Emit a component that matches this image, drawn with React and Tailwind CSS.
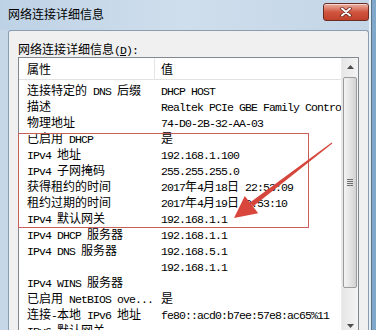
import React from 'react';

// rows of the details list: [property, value]
const rows = [
  ['连接特定的 DNS 后缀', 'DHCP HOST'],
  ['描述', 'Realtek PCIe GBE Family Controller'],
  ['物理地址', '74-D0-2B-32-AA-03'],
  ['已启用 DHCP', '是'],
  ['IPv4 地址', '192.168.1.100'],
  ['IPv4 子网掩码', '255.255.255.0'],
  ['获得租约的时间', '2017年4月18日 22:53:09'],
  ['租约过期的时间', '2017年4月19日 0:53:10'],
  ['IPv4 默认网关', '192.168.1.1'],
  ['IPv4 DHCP 服务器', '192.168.1.1'],
  ['IPv4 DNS 服务器', '192.168.5.1'],
  ['', '192.168.1.1'],
  ['IPv4 WINS 服务器', ''],
  ['已启用 NetBIOS ove...', '是'],
  ['连接-本地 IPv6 地址', 'fe80::acd0:b7ee:57e8:ac65%11'],
  ['IPv6 默认网关', ''],
];

// split into CJK and latin runs so latin gets the narrow mono face
const Mixed = ({ text }) => {
  const parts = text.split(/([\u3000-\u9fff\uff00-\uffef]+)/).filter(Boolean);
  return parts.map((p, i) =>
    /[\u3000-\u9fff\uff00-\uffef]/.test(p) ? (
      <span key={i} className="text-[12px]">{p}</span>
    ) : (
      <span key={i} className="font-['Liberation_Mono',monospace] text-[11.5px] tracking-[-0.9px]">{p}</span>
    )
  );
};

function App() {
  return (
    <div className="relative w-[376px] h-[330px] overflow-hidden flex bg-[#c6d7e8] font-['Noto_Sans_CJK_SC',sans-serif] text-black">
      <div className="w-[369px] shrink-0 flex flex-col">
        {/* title bar */}
        <div className="h-[30px] shrink-0 flex items-start justify-between pl-2 bg-gradient-to-r from-[#bed2e6] via-[#cfdeec] to-[#c3d5e7]">
          <span className="text-[12px] leading-[16px] mt-[6px]">网络连接详细信息</span>
          <div className="mt-[3px] w-[46px] h-[18px] rounded-[3px] border border-[#6b2c24] bg-gradient-to-b from-[#eab0a2] via-[#d0553f] to-[#c0412b] flex items-center justify-center shadow-[inset_0_1px_0_rgba(255,255,255,0.5)]">
            <svg width="12" height="10" viewBox="0 0 12 10">
              <path d="M2 1.5 L10 8.5 M10 1.5 L2 8.5" stroke="#5a2018" strokeWidth="3.4" strokeLinecap="round" />
              <path d="M2 1.5 L10 8.5 M10 1.5 L2 8.5" stroke="#ffffff" strokeWidth="2" strokeLinecap="round" />
            </svg>
          </div>
        </div>

        {/* dialog body */}
        <div className="ml-2 flex-1 min-h-0 overflow-hidden bg-[#f0f0f0] border-l border-t border-r border-[#8b9db1] rounded-t-[3px] pt-2 px-[9px]">
          <div className="h-4 leading-4 whitespace-pre">
            <span className="text-[12px]">网络连接详细信息</span>
            <span className="font-['Liberation_Mono',monospace] text-[11.5px] tracking-[-0.9px]">(<span className="underline">D</span>):</span>
          </div>

          <div className="mt-[2px] border border-[#828790] bg-white flex h-[300px]">
            <div className="flex-1 min-w-0 overflow-hidden">
              {/* header */}
              <div className="h-[22px] flex border-b border-[#e2e2e2]">
                <div className="w-[136px] shrink-0 pl-2 flex items-center border-r border-[#e5e5e5] text-[12px]">属性</div>
                <div className="pl-[6px] flex items-center text-[12px]">值</div>
              </div>
              {rows.map(([k, v], i) => (
                <div key={i} className="h-4 leading-4 flex whitespace-pre">
                  <div className="w-[136px] shrink-0 pl-2">
                    <Mixed text={k} />
                  </div>
                  <div className="pl-[6px] shrink-0">
                    <Mixed text={v} />
                  </div>
                </div>
              ))}
            </div>

            {/* scrollbar */}
            <div className="w-[17px] shrink-0 flex flex-col bg-gradient-to-r from-[#e6e6e6] to-[#f4f4f4] border-l border-[#eaeaea]">
              <div className="h-[17px] shrink-0 flex items-center justify-center">
                <svg width="7" height="4" viewBox="0 0 7 4"><path d="M0 4 L3.5 0 L7 4 Z" fill="#4d4d4d" /></svg>
              </div>
              <div className="mt-[2px] mx-[1px] h-[211px] shrink-0 rounded-[2px] border border-[#9b9b9b] bg-gradient-to-r from-[#f3f3f3] via-[#e4e4e4] to-[#d2d2d2] flex flex-col items-center justify-center gap-[1px]">
                <div className="w-[6px] h-[1px] bg-[#6f6f6f]" />
                <div className="w-[6px] h-[1px] bg-[#6f6f6f]" />
                <div className="w-[6px] h-[1px] bg-[#6f6f6f]" />
                <div className="w-[6px] h-[1px] bg-[#6f6f6f]" />
              </div>
              <div className="mt-[30px] h-[17px] shrink-0 flex items-start justify-center pt-[6px]">
                <svg width="7" height="4" viewBox="0 0 7 4"><path d="M0 0 L3.5 4 L7 0 Z" fill="#4d4d4d" /></svg>
              </div>
            </div>
          </div>
        </div>
      </div>

      {/* right window edge */}
      <div className="w-[7px] flex">
        <div className="w-[2px] bg-[#e6eef6]" />
        <div className="w-[1px] bg-[#5f7388]" />
        <div className="flex-1 bg-[#7fa8cb]" />
      </div>

      {/* annotation: red box and arrow */}
      <div className="absolute left-[18px] top-[133px] w-[291px] h-[95px] border border-[#c65e5a]" />
      <svg className="absolute inset-0 pointer-events-none" width="376" height="330" viewBox="0 0 376 330">
        <path d="M332.3 143.4 L331.7 142.6 L250 202.6 L253 206.6 Z" fill="#d6453b" />
        <path d="M234 218 L244.8 195.9 L258.2 213.3 Z" fill="#d9463b" />
      </svg>
    </div>
  );
}

export default App;
